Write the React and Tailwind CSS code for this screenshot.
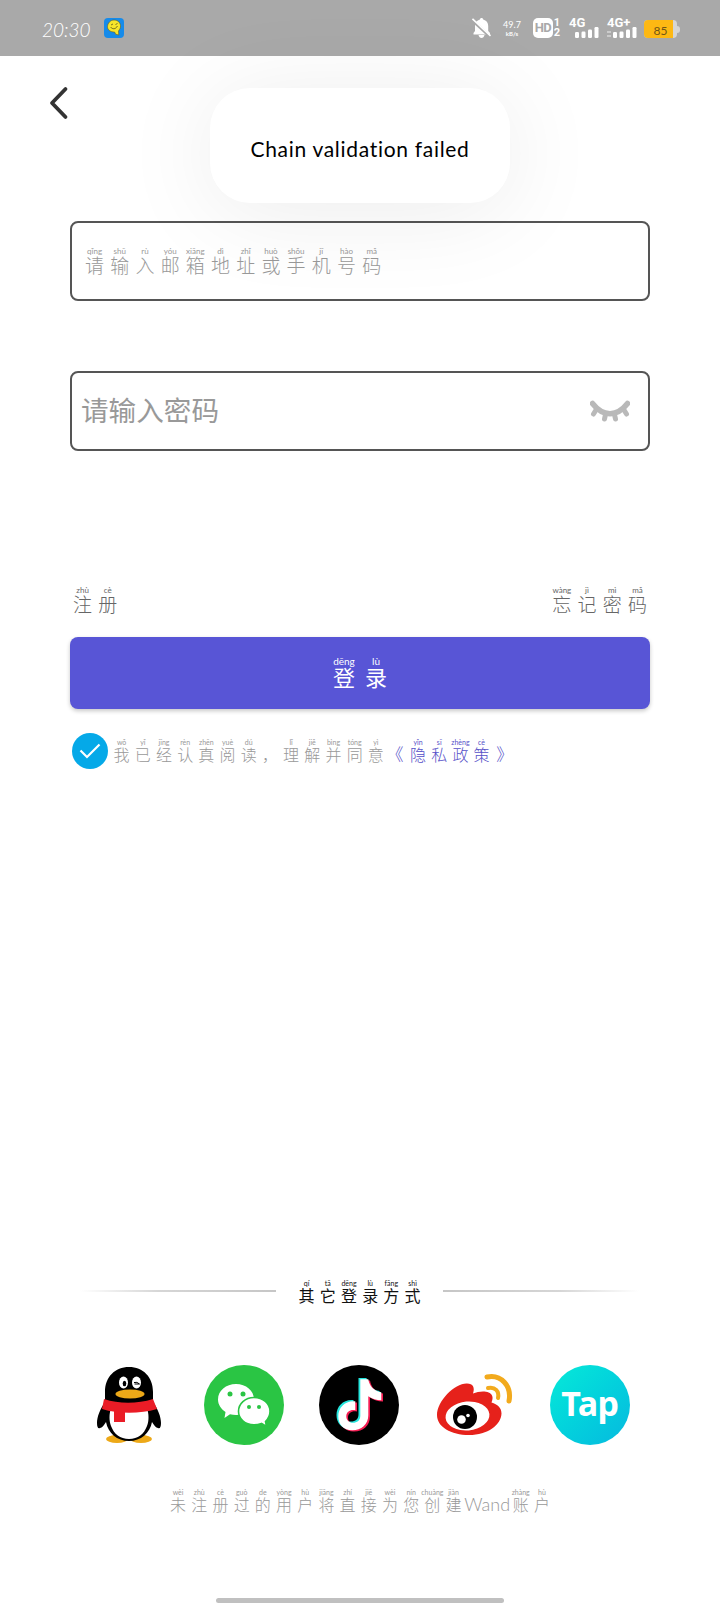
import { useState } from 'react';

const accountHint = [
  ['请', 'qǐng'], ['输', 'shū'], ['入', 'rù'], ['邮', 'yóu'], ['箱', 'xiāng'], ['地', 'dì'],
  ['址', 'zhǐ'], ['或', 'huò'], ['手', 'shǒu'], ['机', 'jī'], ['号', 'hào'], ['码', 'mǎ']
];
const agreeText = [
  ['我', 'wǒ'], ['已', 'yǐ'], ['经', 'jīng'], ['认', 'rèn'], ['真', 'zhēn'], ['阅', 'yuè'], ['读', 'dú'], ['，', ''],
  ['理', 'lǐ'], ['解', 'jiě'], ['并', 'bìng'], ['同', 'tóng'], ['意', 'yì']
];
const policyText = [['隐', 'yǐn'], ['私', 'sī'], ['政', 'zhèng'], ['策', 'cè']];
const footerText = [
  ['未', 'wèi'], ['注', 'zhù'], ['册', 'cè'], ['过', 'guò'], ['的', 'de'], ['用', 'yòng'], ['户', 'hù'],
  ['将', 'jiāng'], ['直', 'zhí'], ['接', 'jiē'], ['为', 'wèi'], ['您', 'nín'], ['创', 'chuàng'], ['建', 'jiàn']
];

const sizes = {
  sm: { cell: 'w-[21.2px]', pinyin: 'text-[7px] h-[8px]', char: 'text-[16px] h-[16px]' },
  md: { cell: 'w-[25.2px]', pinyin: 'text-[8px] h-[9px]', char: 'text-[19px] h-[19px]' },
  lg: { cell: 'w-[32px]', pinyin: 'text-[10px] h-[11px]', char: 'text-[22px] h-[22px]' }
};

// 帶拼音的文字
function Pinyin({ text, size = 'sm', className = '' }) {
  const s = sizes[size];
  return (
    <span className={`flex font-light ${className}`}>
      {text.map(([char, pinyin], index) => (
        <span key={index} className={`flex flex-col items-center shrink-0 ${s.cell}`}>
          <span className={`block leading-none font-normal whitespace-nowrap ${s.pinyin}`}>{pinyin}</span>
          <span className={`block leading-none ${s.char}`}>{char}</span>
        </span>
      ))}
    </span>
  );
}

function Signal({ label, dots }) {
  return (
    <div className="relative w-8 h-5 text-white">
      <span className="absolute left-0 top-0 text-[13px] leading-[10px] font-bold font-['Roboto',sans-serif]">{label}</span>
      <svg className="absolute inset-0" width="32" height="20" viewBox="0 0 32 20" fill="currentColor">
        {dots && <path d="M0 13h4v2H0zM0 17h4v2H0z" opacity=".4" />}
        <rect x="6" y="14" width="4" height="6" rx="1.2" />
        <rect x="12.5" y="13.5" width="4" height="6.5" rx="1.2" />
        <rect x="19" y="11.5" width="4" height="8.5" rx="1.2" />
        <rect x="25.5" y="9" width="4" height="11" rx="1.2" />
      </svg>
    </div>
  );
}

function StatusBar() {
  return (
    <header className="h-14 bg-[#a9a9a9] text-white flex items-center pl-[42px] pr-10 shrink-0">
      <span className="w-[62px] text-[19px] leading-5 italic font-light pt-1 font-['Lato',sans-serif]">20:30</span>
      <svg width="20" height="20" viewBox="0 0 20 20">
        <rect width="20" height="20" rx="4" fill="#168bea" />
        <path d="M10 2c4 0 7 3 6.500 7-.3 2-1.600 3-2 4l.3 4-3.200-.8-1-2.200C6.500 14 3.300 12 3.500 8.500 3.700 5 6.500 2 10 2z" fill="#f7e52b" stroke="#685d1c" strokeWidth=".6" />
        <path d="M7 7l2-1M11.500 6.500l2-1M6.500 9c2 2.500 5 2.500 7-1" fill="none" stroke="#5e551a" strokeWidth=".8" />
      </svg>
      <div className="flex items-center ml-auto">
        <svg width="20" height="20" viewBox="0 0 20 20">
          <path d="M9.500 0c1 0 1.500.6 1.700 1.400 3.200.8 5 3.300 5 6.500v5L18 15v1.500H1.500V15L3 13V7.900c0-3.200 1.800-5.700 4.900-6.500C8.100.6 8.600 0 9.500 0zM6.500 17h6C12 19 11 20 9.500 20s-2.500-1-3-3z" fill="#fff" />
          <path d="M-.5 1.500l19 17.500" stroke="#a9a9a9" strokeWidth="3" />
          <path d="M.5.8l18 17" stroke="#fff" strokeWidth="1.600" />
        </svg>
        <div className="w-7 ml-1.5 flex flex-col items-center text-center leading-none font-['Lato',sans-serif]">
          <span className="text-[9px] h-[13px] pt-0.5">49.7</span>
          <span className="text-[6px] h-[7px] font-bold">kB/s</span>
        </div>
        <div className="flex items-center ml-[7px]">
          <span className="w-5 h-5 rounded-[5px] bg-white text-[#a9a9a9] text-[13px] leading-5 font-bold text-center tracking-tighter font-['Roboto',sans-serif]">HD</span>
          <span className="w-2 h-5 flex flex-col items-center text-[11px] leading-[10px] font-bold font-['Roboto',sans-serif]">
            <span>1</span>
            <span>2</span>
          </span>
        </div>
        <div className="flex gap-1.5 ml-2">
          <Signal label="4G" />
          <Signal label="4G+" dots />
        </div>
        <div className="flex items-center ml-[5px] pt-0.5">
          <div className="w-[33px] h-[18px] rounded-[4px] bg-[#d5d5d5] overflow-hidden">
            <div className="w-[29px] h-full bg-[#fdb813] text-[#705516] text-[12px] leading-[21px] pl-1 text-center font-['Lato',sans-serif]">85</div>
          </div>
          <div className="w-[3px] h-[7px] rounded-r bg-[#d5d5d5]"></div>
        </div>
      </div>
    </header>
  );
}

function QQIcon() {
  return (
    <svg width="66" height="80" viewBox="0 0 66 80">
      <ellipse cx="20" cy="74" rx="11" ry="4" fill="#eda918" />
      <ellipse cx="44" cy="74" rx="11" ry="4" fill="#eda918" />
      <path d="M32 2C18 2 8 12 8 27v10C3 44 0 52 0 58c0 4 1 6 3 5 2 0 4-3 6-6 2 11 11 19 23 19s21-8 23-19c2 3 4 6 6 6 2 1 3-1 3-5 0-6-3-14-8-21V27C56 12 46 2 32 2z" fill="#000" />
      <path d="M14 43h36c2 6 2 13 0 18-3 8-9 13-18 13s-15-5-18-13c-2-5-2-12 0-18z" fill="#fff" />
      <ellipse cx="26.500" cy="17.500" rx="4.500" ry="6" fill="#fff" />
      <ellipse cx="39.500" cy="17.500" rx="4.500" ry="6" fill="#fff" />
      <ellipse cx="27.500" cy="18.500" rx="1.800" ry="2.700" fill="#000" />
      <path d="M37 17.500q3-1 5.500 1.500h-5" stroke="#000" strokeWidth="1" fill="none" />
      <ellipse cx="33" cy="29" rx="14.500" ry="4.500" fill="#eda918" />
      <path d="M7 34c15 5 33 5 49 0l4 10c-17 5-39 5-55 0z" fill="#ea1c26" />
      <path d="M17 45h11v12H17z" fill="#ea1c26" />
    </svg>
  );
}

function WechatIcon() {
  return (
    <svg width="80" height="80" viewBox="0 0 80 80">
      <circle cx="40" cy="40" r="40" fill="#2ac544" />
      <path d="M32 19c10 0 18 6.500 18 15.500S42 50 32 50c-2 0-4-.3-6-.8L20.500 53l1-6C17 44 14 39.500 14 34.500 14 25.500 22 19 32 19z" fill="#fff" />
      <path d="M50 32.500c9 0 16 6 16 14 0 4-2 7.500-4.500 10l1 5-5-3c-2.300.8-4.800 1.300-7.500 1.300-9 0-15.500-6-15.500-13.500s6.500-13.800 15.500-13.800z" fill="#fff" stroke="#2ac544" strokeWidth="1.600" />
      <circle cx="26" cy="29" r="2.500" fill="#2ac544" />
      <circle cx="39" cy="29" r="2.500" fill="#2ac544" />
      <circle cx="45" cy="42" r="2" fill="#2ac544" />
      <circle cx="55" cy="42" r="2" fill="#2ac544" />
    </svg>
  );
}

function NoteShape({ x, y, fill }) {
  return (
    <path
      transform={`translate(${x} ${y})`}
      fill={fill}
      d="M41 14h8c1 7 6 12 13 13v8c-5 0-9-1.500-13-4v19c0 9-7 15-16 15s-14-6-14-14c0-9 7-16 17-15v9c-5-1-9 1.500-9 6 0 4 3 6.500 6.500 6.500 4.500 0 7.500-2.500 7.500-7z"
    />
  );
}

function DouyinIcon() {
  return (
    <svg width="80" height="80" viewBox="0 0 80 80">
      <circle cx="40" cy="40" r="40" fill="#000" />
      <NoteShape x={-1.5} y={-1} fill="#25e5dd" />
      <NoteShape x={2} y={1.5} fill="#f51d53" />
      <NoteShape x={0.3} y={0.3} fill="#fff" />
    </svg>
  );
}

function WeiboIcon() {
  return (
    <svg width="76" height="80" viewBox="0 0 76 80">
      <path d="M30 18.500c6 0 8 4 6 10 7-3 17-3 19 2 1 2 .5 4-.5 7 6 2 10 5 10 11C64 60 51 70 32 70 14 70 0 62 0 50 0 36 18 18 30 18.500z" fill="#e6211b" />
      <ellipse cx="30.500" cy="51" rx="22" ry="14.500" fill="#fff" transform="rotate(-5 30.500 51)" />
      <circle cx="28" cy="52" r="12" fill="#000" />
      <circle cx="24.500" cy="54.500" r="4.300" fill="#fff" />
      <circle cx="31" cy="50.500" r="1.800" fill="#fff" />
      <path d="M50 12c14-3 25 9 22 24" fill="none" stroke="#f2aa1d" strokeWidth="5" strokeLinecap="round" />
      <path d="M51 23c7-1.500 11.500 3 10 10" fill="none" stroke="#f2aa1d" strokeWidth="4" strokeLinecap="round" />
    </svg>
  );
}

function TapIcon() {
  return (
    <div className="w-20 h-20 rounded-full bg-linear-to-br from-[#08ead8] to-[#08b9df] flex items-center justify-center text-white">
      <span className="text-[34px] leading-none font-bold tracking-[-0.500px] pb-1 font-['Noto_Sans',sans-serif]">Tap</span>
    </div>
  );
}

export default function App() {
  const [account, setAccount] = useState('');
  const [password, setPassword] = useState('');
  const [showPassword, setShowPassword] = useState(false);
  const [agreed, setAgreed] = useState(true);

  return (
    <div className="relative w-[720px] h-[1605px] bg-white overflow-hidden flex flex-col font-['Lato','Noto_Sans_CJK_SC',sans-serif]">
      <StatusBar />

      <div className="h-[165px] pl-12 pt-[30px] shrink-0">
        <button className="block" aria-label="返回">
          <svg width="24" height="34" viewBox="0 0 24 34" fill="none" stroke="#333" strokeWidth="3.800" strokeLinecap="round" strokeLinejoin="round">
            <path d="M17.500 3L4 17l13.500 14" />
          </svg>
        </button>
      </div>

      <main className="px-[70px] flex flex-col shrink-0">
        {/* 帳號 */}
        <label className="relative h-20 border-2 border-[#555] rounded-lg flex items-center pl-2.5">
          {account === '' && <Pinyin text={accountHint} size="md" className="text-[#999]" />}
          <input
            value={account}
            onChange={(e) => setAccount(e.target.value)}
            className="absolute inset-0 w-full px-3 text-xl bg-transparent outline-none"
          />
        </label>

        {/* 密碼 */}
        <div className="mt-[70px] h-20 border-2 border-[#555] rounded-lg flex items-center pl-[9px] pr-[18px]">
          <input
            type={showPassword ? 'text' : 'password'}
            value={password}
            onChange={(e) => setPassword(e.target.value)}
            placeholder="请输入密码"
            className="flex-1 h-12 pb-1 text-[27.600px] outline-none placeholder:text-[#999] font-['Noto_Sans_CJK_SC',sans-serif]"
          />
          <button onClick={() => setShowPassword(!showPassword)}>
            <svg width="40" height="24" viewBox="0 0 40 24" fill="none" stroke="#b9b9b9" strokeWidth="5" strokeLinecap="round">
              <path d="M2.500 4.500C13 18 27 18 37.500 4.500" strokeWidth="5.500" />
              <path d="M6 11l-2.500 4M34 11l2.500 4M15.500 15.500L14.500 20M24.500 15.500L25.500 20" />
            </svg>
          </button>
        </div>

        <div className="mt-[135px] h-[28px] flex justify-between text-[#666]">
          <Pinyin text={[['注', 'zhù'], ['册', 'cè']]} size="md" />
          <Pinyin text={[['忘', 'wàng'], ['记', 'jì'], ['密', 'mì'], ['码', 'mǎ']]} size="md" />
        </div>

        <button className="mt-[23px] h-[72px] rounded-lg bg-[#5855d6] text-white shadow-[0_2px_4px_rgba(0,0,0,0.22)] flex items-center justify-center pb-0.5">
          <Pinyin text={[['登', 'dēng'], ['录', 'lù']]} size="lg" className="font-normal" />
        </button>

        <div className="mt-6 h-9 flex items-center pl-0.5">
          <button
            onClick={() => setAgreed(!agreed)}
            className={`w-9 h-9 rounded-full flex items-center justify-center ${agreed ? 'bg-[#05a9e8]' : 'bg-gray-300'}`}
          >
            <svg width="22" height="18" viewBox="0 0 22 18" fill="none" stroke="#fff" strokeWidth="2.200">
              <path d="M1.500 8.500l6.500 6.500L20.500 2.500" />
            </svg>
          </button>
          <Pinyin text={agreeText} className="ml-[3px] text-[#999]" />
          <a href="#policy" className="flex items-end h-6 text-[#5550c8]">
            <span className="w-[21px] h-[17px] text-right text-[17px] leading-none font-light -translate-x-1">《</span>
            <Pinyin text={policyText} />
            <span className="h-[17px] text-[17px] leading-none font-light translate-x-1">》</span>
          </a>
        </div>
      </main>

      {/* 其它登录方式 */}
      <section className="mt-[511px] flex flex-col shrink-0">
        <div className="h-6 flex items-center pl-20 pr-[76px]">
          <div className="w-[196px] h-0.5 -mt-0.5 bg-linear-to-r from-transparent via-[#d6d6d6] via-40% to-[#c6c6c6]"></div>
          <Pinyin
            text={[['其', 'qí'], ['它', 'tā'], ['登', 'dēng'], ['录', 'lù'], ['方', 'fāng'], ['式', 'shì']]}
            className="ml-5 text-[#111] font-normal"
          />
          <div className="w-[196px] h-0.5 -mt-0.5 ml-5 bg-linear-to-l from-transparent via-[#d6d6d6] via-40% to-[#c6c6c6]"></div>
        </div>
        <div className="mt-[61px] h-20 flex pl-[97px]">
          <button><QQIcon /></button>
          <button className="ml-[41px]"><WechatIcon /></button>
          <button className="ml-[35px]"><DouyinIcon /></button>
          <button className="ml-[38px]"><WeiboIcon /></button>
          <button className="ml-[37px]"><TapIcon /></button>
        </div>
        <div className="mt-[44px] flex justify-center text-[#999]">
          <Pinyin text={footerText} />
          <span className="w-[46px] pt-[5px] text-[18px] leading-5 font-light text-center">Wand</span>
          <Pinyin text={[['账', 'zhàng'], ['户', 'hù']]} />
        </div>
      </section>

      <div className="mt-auto mb-0.5 w-72 h-[5px] rounded-full bg-[#c0c0c0] self-center"></div>

      {/* 提示訊息 */}
      <div className="absolute left-[210px] top-[88px] w-[300px] h-[115px] rounded-[40px] bg-white shadow-[0_8px_96px_rgba(0,0,0,0.08)] flex items-center justify-center">
        <span className="pt-1.5 text-[21px] leading-7 text-black tracking-[0.700px] whitespace-nowrap">Chain validation failed</span>
      </div>
    </div>
  );
}
